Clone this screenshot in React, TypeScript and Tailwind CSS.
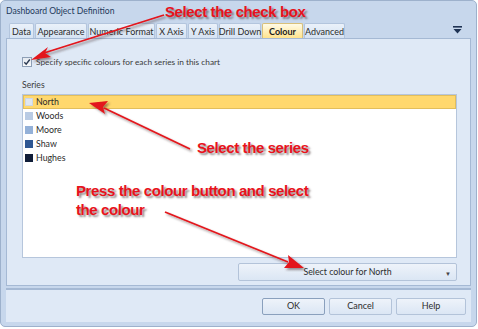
import React from 'react';

const tabs = [
  { label: 'Data', w: 'w-[25px]' },
  { label: 'Appearance', w: 'w-[52px]' },
  { label: 'Numeric Format', w: 'w-[67px]' },
  { label: 'X Axis', w: 'w-[31px]' },
  { label: 'Y Axis', w: 'w-[30px]' },
  { label: 'Drill Down', w: 'w-[42px]' },
  { label: 'Colour', w: 'w-[41px]', active: true },
  { label: 'Advanced', w: 'w-[41px]' },
];

const series = [
  { name: 'North', color: 'bg-[#dfe6f0]', selected: true },
  { name: 'Woods', color: 'bg-[#b9cbe4]' },
  { name: 'Moore', color: 'bg-[#94b1d8]' },
  { name: 'Shaw', color: 'bg-[#2f5793]' },
  { name: 'Hughes', color: 'bg-[#101d38]' },
];

const note = "absolute text-[#e8121b] font-bold text-[15px] leading-[18px] tracking-[-0.4px] [font-family:'Liberation_Sans',Arial,sans-serif] [text-shadow:2px_2px_2px_rgba(60,40,40,0.55)] whitespace-nowrap";

export default function App() {
  return (
    <div className="relative w-[478px] h-[329px] bg-white text-[#1e1e1e] [font-family:Lato,'Open_Sans',sans-serif] overflow-hidden">
      {/* dialog frame */}
      <div className="w-[477px] h-[327px] rounded-[5px] border border-[#9db1cc] bg-[#c7d7ec] flex flex-col">
        <div className="h-[21px] pl-[5px] pt-[4px] text-[8.6px] text-[#1e395b] leading-[13px]">Dashboard Object Definition</div>

        {/* tabs */}
        <div className="flex items-end h-[16px] pl-[8px] pr-[10px]">
          {tabs.map((t) => (
            <div
              key={t.label}
              className={`${t.w} mr-[1px] h-[15px] flex items-center justify-center whitespace-nowrap text-[9px] leading-none border border-b-0 rounded-t-[2px] ${
                t.active
                  ? 'bg-gradient-to-b from-[#fffbe6] to-[#ffe38c] border-[#d8c07a] font-bold text-[#1b1b1b]'
                  : 'bg-gradient-to-b from-[#eaf1fa] to-[#d6e3f3] border-[#b3c5dd] text-[#2c2c2c]'
              }`}
            >
              {t.label}
            </div>
          ))}
          <div className="flex-1" />
          <svg width="9" height="8" viewBox="0 0 9 8" className="mb-[4px] mr-[4px]">
            <rect x="0" y="0" width="9" height="1.6" fill="#1f3354" />
            <path d="M0.5 3 L8.5 3 L4.5 7.5 Z" fill="#1f3354" />
          </svg>
        </div>

        {/* tab panel */}
        <div className="mx-[5px] h-[248px] border border-[#a5b9d4] bg-[#dfe9f6] pl-[15px] pr-[13px] pt-[17px]">
          <div className="flex items-center gap-[4px] h-[12px]">
            <div className="w-[10px] h-[10px] border border-[#8e9fb6] bg-gradient-to-b from-[#e4e9f0] to-[#f7f9fb] flex items-center justify-center">
              <svg width="8" height="8" viewBox="0 0 8 8">
                <path d="M1.3 4.2 L3.2 6.2 L6.8 1.5" stroke="#2b3a52" strokeWidth="1.4" fill="none" />
              </svg>
            </div>
            <span className="text-[8.3px] leading-none text-[#3a3a3a]">Specify specific colours for each series in this chart</span>
          </div>
          <div className="mt-[11px] text-[8.6px] leading-[12px] text-[#3a3a3a]">Series</div>
          <div className="mt-[3px] h-[164px] border border-[#b6c6dc] bg-white">
            {series.map((s) => (
              <div
                key={s.name}
                className={`flex items-center h-[14px] pl-[1px] ${
                  s.selected ? 'bg-[#ffd86e] border border-[#e2be5c]' : 'border border-transparent'
                }`}
              >
                <div className={`w-[8px] h-[8px] ${s.color} ${s.selected ? 'border border-[#ccd6e4]' : ''}`} />
                <span className="ml-[3px] text-[8.8px] leading-none text-[#2a2a2a]">{s.name}</span>
              </div>
            ))}
          </div>
          <div className="flex justify-end mt-[5px]">
            <div className="relative w-[219px] h-[18px] border border-[#b3c3d9] rounded-[2px] bg-gradient-to-b from-[#eef3fa] to-[#dbe6f4] flex items-center justify-center text-[8.8px] text-[#2c2c2c]">
              Select colour for North
              <span className="absolute right-[5px] top-[5px] text-[6px] text-[#444]">▼</span>
            </div>
          </div>
        </div>

        {/* footer */}
        <div className="mx-[5px] mt-[2px] h-[34px] border-t-2 border-[#a5b9d4] bg-[#dfe9f6] flex items-center justify-end gap-[4px] pr-[5px]">
          {['OK', 'Cancel', 'Help'].map((b, i) => (
            <div
              key={b}
              className={`${i === 2 ? 'w-[70px]' : 'w-[63px]'} h-[17px] border ${
                i === 0 ? 'border-[#8aa0bd]' : 'border-[#b3c3d9]'
              } rounded-[2px] bg-gradient-to-b from-[#eef3fa] to-[#dbe6f4] flex items-center justify-center text-[9px] text-[#2c2c2c]`}
            >
              {b}
            </div>
          ))}
        </div>
      </div>

      {/* annotations */}
      <svg className="absolute left-0 top-0 pointer-events-none" width="478" height="329" viewBox="0 0 478 329">
        <defs>
          <filter id="sh" x="-20%" y="-20%" width="140%" height="140%">
            <feDropShadow dx="2" dy="2" stdDeviation="1.2" floodColor="#3c2828" floodOpacity="0.5" />
          </filter>
        </defs>
        <g filter="url(#sh)" fill="#e3141b" stroke="#e3141b">
          <line x1="164" y1="15" x2="44" y2="53" strokeWidth="1.8" />
          <path d="M31 60 L48 47 L45 53 L51 57 Z" stroke="none" />
          <line x1="190" y1="149" x2="104" y2="108" strokeWidth="1.8" />
          <path d="M89 103 L108 101 L103 107 L105 114 Z" stroke="none" />
          <line x1="165" y1="212" x2="288" y2="262" strokeWidth="1.8" />
          <path d="M304 268 L284 268 L289 262 L288 255 Z" stroke="none" />
        </g>
      </svg>
      <div className={`${note} left-[165px] top-[3px]`}>Select the check box</div>
      <div className={`${note} left-[197px] top-[139px]`}>Select the series</div>
      <div className={`${note} left-[76px] top-[182px]`}>Press the colour button and select</div>
      <div className={`${note} left-[76px] top-[201px]`}>the colour</div>
    </div>
  );
}
